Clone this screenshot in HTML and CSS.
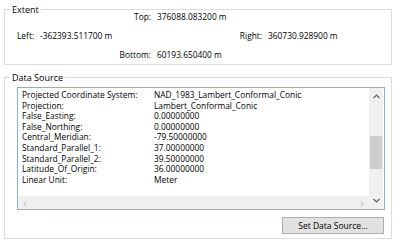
FILE: index.html
```html
<!DOCTYPE html>
<html lang="en">
<head>
  <meta charset="UTF-8">
  <title>Layer Properties - Source</title>
  <link rel="stylesheet" href="styles.css">
</head>
<body>
  <div class="group extent">
    <span class="group-title">Extent</span>
    <div class="extent-grid">
      <span class="lbl top-lbl">Top:</span>
      <span class="val top-val">376088.083200 m</span>

      <span class="lbl left-lbl">Left:</span>
      <span class="val left-val">-362393.511700 m</span>
      <span class="lbl right-lbl">Right:</span>
      <span class="val right-val">360730.928900 m</span>

      <span class="lbl bottom-lbl">Bottom:</span>
      <span class="val bottom-val">60193.650400 m</span>
    </div>
  </div>

  <div class="group source">
    <span class="group-title">Data Source</span>
    <div class="listbox">
      <div class="list-main">
        <div class="list-rows">
          <span>Projected Coordinate System:</span><span>NAD_1983_Lambert_Conformal_Conic</span>
          <span>Projection:</span><span>Lambert_Conformal_Conic</span>
          <span>False_Easting:</span><span>0.00000000</span>
          <span>False_Northing:</span><span>0.00000000</span>
          <span>Central_Meridian:</span><span>-79.50000000</span>
          <span>Standard_Parallel_1:</span><span>37.00000000</span>
          <span>Standard_Parallel_2:</span><span>39.50000000</span>
          <span>Latitude_Of_Origin:</span><span>36.00000000</span>
          <span>Linear Unit:</span><span>Meter</span>
        </div>
        <div class="hscroll">
          <span class="arrow">&lsaquo;</span>
          <span class="arrow">&rsaquo;</span>
        </div>
      </div>
      <div class="vscroll">
        <svg class="chev" width="7" height="5" viewBox="0 0 7 5"><path d="M0.5 4 L3.5 1 L6.5 4" fill="none" stroke="#606060" stroke-width="1.2"/></svg>
        <div class="track"><div class="thumb"></div></div>
        <svg class="chev" width="7" height="5" viewBox="0 0 7 5"><path d="M0.5 1 L3.5 4 L6.5 1" fill="none" stroke="#606060" stroke-width="1.2"/></svg>
      </div>
    </div>
    <div class="actions">
      <button type="button">Set Data Source...</button>
    </div>
  </div>
</body>
</html>
```

FILE: styles.css
```css
body {
  margin: 0;
  padding: 9px 8px 0 4px;
  background: #ffffff;
  color: #000;
  font-family: 'Open Sans', 'Liberation Sans', sans-serif;
  font-size: 8.4px;
}

.group {
  position: relative;
  border: 1px solid #dcdcdc;
  box-sizing: border-box;
}

.group-title {
  position: absolute;
  top: -7px;
  left: 5px;
  padding: 0 2px;
  background: #fff;
  line-height: 13px;
  font-size: 9px;
}

.extent {
  height: 56px;
}

.extent-grid {
  display: grid;
  grid-template-columns: 23px 117px 111px 1fr;
  grid-auto-rows: 13px;
  row-gap: 6px;
  line-height: 13px;
  padding-left: 12px;
}

.lbl {
  text-align: right;
  padding-right: 6px;
}

.top-lbl,
.bottom-lbl {
  grid-column: 2;
}

.top-val,
.bottom-val {
  grid-column: 3 / 5;
}

.left-lbl {
  grid-column: 1;
  text-align: left;
  padding-right: 0;
}

.left-val {
  grid-column: 2;
}

.right-lbl {
  grid-column: 3;
}

.right-val {
  grid-column: 4;
}

.source {
  margin-top: 12px;
  height: 162px;
  padding: 9px 6px 0 12px;
}

.listbox {
  display: flex;
  height: 123px;
  border: 1px solid #7eb4ea;
  box-sizing: border-box;
}

.list-main {
  flex: 1;
  display: flex;
  flex-direction: column;
}

.list-rows {
  flex: 1;
  display: grid;
  grid-template-columns: 132px 1fr;
  grid-auto-rows: 10.6px;
  line-height: 10.6px;
  padding: 2px 0 0 4px;
  overflow: hidden;
  white-space: nowrap;
}

.hscroll {
  height: 13px;
  background: #f0f0f0;
  display: flex;
  justify-content: space-between;
  align-items: center;
  padding: 0 5px;
  color: #c0c0c0;
  font-size: 13px;
  line-height: 13px;
}

.vscroll {
  width: 14px;
  background: #f0f0f0;
  display: flex;
  flex-direction: column;
  align-items: center;
  padding: 6px 0 6px;
  box-sizing: border-box;
  margin-right: 1px;
}

.track {
  flex: 1;
  width: 100%;
  padding: 37px 1px 0;
  box-sizing: border-box;
}

.thumb {
  height: 33px;
  background: #cdcdcd;
}

.chev {
  display: block;
}

.actions {
  display: flex;
  justify-content: flex-end;
  padding: 7px 1px 0 0;
}

button {
  width: 102px;
  height: 17px;
  padding: 0;
  background: #e1e1e1;
  border: 1px solid #adadad;
  font-family: 'Open Sans', 'Liberation Sans', sans-serif;
  font-size: 8.5px;
  color: #000;
}
```
